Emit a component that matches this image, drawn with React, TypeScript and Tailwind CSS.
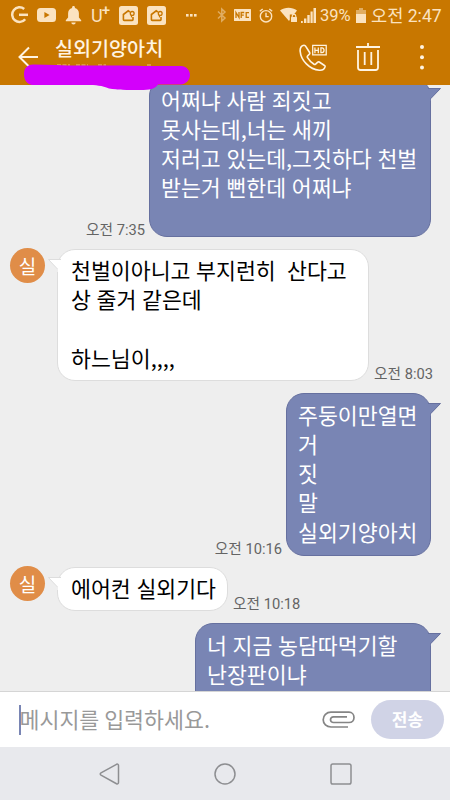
import React from 'react';

interface Message {
  id: number;
  sent: boolean;
  lines: string[];
  time?: string;
  row: string;
  bubble: string;
}

const messages: Message[] = [
  {
    id: 1,
    sent: true,
    lines: ['어쩌냐 사람 죄짓고', '못사는데,너는 새끼', '저러고 있는데,그짓하다 천벌', '받는거 뻔한데 어쩌냐'],
    time: '오전 7:35',
    row: '-mt-[7px]',
    bubble: 'w-[282px] h-[159px]',
  },
  {
    id: 2,
    sent: false,
    lines: ['천벌이아니고 부지런히  산다고', '상 줄거 같은데', '', '하느님이,,,,'],
    time: '오전 8:03',
    row: 'mt-3',
    bubble: 'w-[312px] h-[132px]',
  },
  {
    id: 3,
    sent: true,
    lines: ['주둥이만열면', '거', '짓', '말', '실외기양아치'],
    time: '오전 10:16',
    row: 'mt-3',
    bubble: 'w-[145px] h-[163px]',
  },
  {
    id: 4,
    sent: false,
    lines: ['에어컨 실외기다'],
    time: '오전 10:18',
    row: 'mt-[11px]',
    bubble: 'w-[171px] h-[44px]',
  },
  {
    id: 5,
    sent: true,
    lines: ['너 지금 농담따먹기할', '난장판이냐'],
    row: 'mt-3',
    bubble: 'w-[236px] h-[100px]',
  },
];

const HomeBadge: React.FC = () => (
  <svg width="19" height="19" viewBox="0 0 19 19" className="shrink-0">
    <rect width="19" height="19" rx="2.5" fill="#fbe3c0" />
    <path d="M14 11v2.600a.8.8 0 0 1-.8.8H5.200a.8.8 0 0 1-.8-.8V8.500L9.200 4.800l1.600 1.200" fill="none" stroke="#c87700" strokeWidth="1.600" />
    <circle cx="13.200" cy="7.400" r="1.900" fill="none" stroke="#c87700" strokeWidth="1.300" />
    <path d="M12.500 9.200v2.200" stroke="#c87700" strokeWidth="1.200" />
  </svg>
);

const StatusBar: React.FC = () => (
  <div className="flex h-[30px] shrink-0 items-center pl-[10px] text-[#fbe3c0]">
    <svg width="19" height="18" viewBox="0 0 19 18" fill="none" stroke="currentColor" strokeWidth="2.500" className="shrink-0">
      <path d="M14.200 3A7.300 7.300 0 1 0 15.200 13.200" />
      <path d="M9 8.800h9" />
    </svg>
    <svg width="19" height="14" viewBox="0 0 19 14" className="ml-2 shrink-0">
      <rect width="19" height="14" rx="3.500" fill="currentColor" />
      <path d="M7.400 4v6l5.200-3z" fill="#c87700" />
    </svg>
    <svg width="17" height="19" viewBox="0 0 17 19" fill="currentColor" className="ml-[9px] shrink-0">
      <path d="M8.500 0c.9 0 1.400.6 1.400 1.400v.5c2.700.7 4 2.800 4 5.400v4.300l2.300 2.600v1H.8v-1l2.300-2.600V7.300C3.100 4.700 4.400 2.600 7.100 1.900v-.5C7.100.6 7.600 0 8.500 0z" />
      <path d="M6.300 16.500h4.400a2.200 2 0 0 1-4.400 0z" />
    </svg>
    <div className="ml-[9px] flex h-6 w-[19px] shrink-0 items-start">
      <span className="font-['Roboto'] text-[18px] leading-[26px]">U</span>
      <span className="-ml-px font-['Roboto'] text-[15px] font-medium leading-[14px]">+</span>
    </div>
    <div className="ml-[9px] flex gap-[9px]">
      <HomeBadge />
      <HomeBadge />
    </div>
    <svg width="11" height="3" viewBox="0 0 11 3" fill="currentColor" className="ml-5 shrink-0">
      <rect width="2.600" height="2.600" />
      <rect x="4" width="2.600" height="2.600" />
      <rect x="8" width="2.600" height="2.600" />
    </svg>
    <svg width="10" height="16" viewBox="0 0 10 16" fill="none" stroke="#e0ad62" strokeWidth="1.500" className="ml-5 shrink-0">
      <path d="M1 4.500l7 6.500-3.200 3V2L8 5l-7 6.500" />
    </svg>
    <svg width="17" height="12" viewBox="0 0 17 12" className="ml-[7px] shrink-0">
      <rect width="17" height="12" rx=".5" fill="currentColor" />
      <path d="M2 9V3.500L5 8.500V3M7.200 9V3.500h3M7.200 6.200h2.600M15 3.700h-2.800v4.600H15" fill="none" stroke="#c87700" strokeWidth="1.300" />
    </svg>
    <svg width="14" height="15" viewBox="0 0 14 15" fill="none" stroke="currentColor" strokeWidth="1.400" className="ml-2 shrink-0">
      <circle cx="7" cy="8.300" r="5.700" />
      <path d="M7 4.800v3.800h2.700M.8 3.300 3.700 1M13.200 3.300 10.300 1" />
    </svg>
    <svg width="18" height="16" viewBox="0 0 18 16" className="ml-[7px] shrink-0">
      <path d="M0 3.500C5-.3 12-.3 17 3.500L9 14z" fill="currentColor" />
      <rect x="9.800" y="7.500" width="7.500" height="8" fill="#c87700" />
      <rect x="11" y="10" width="6" height="5" rx=".5" fill="currentColor" />
      <path d="M12.200 10.500V9.200a1.800 1.800 0 0 1 3.600 0v1.300" fill="none" stroke="currentColor" strokeWidth="1.200" />
    </svg>
    <svg width="15" height="15" viewBox="0 0 15 15" fill="currentColor" className="ml-[3px] shrink-0">
      <path d="M0 13h1.800v2H0zM3 10.500h2.400V15H3zM6.300 7h2.400v8H6.300zM9.500 3.500h2.200V15H9.500zM12.500 0H15v15h-2.500z" />
    </svg>
    <span className="ml-1 w-[31px] translate-y-px font-['Roboto'] text-[16.500px] leading-5">39%</span>
    <svg width="10" height="15" viewBox="0 0 10 15" className="ml-[5px] shrink-0">
      <path d="M3 0h4v2h3v4H0V2h3z" fill="#e0ad62" />
      <rect y="6" width="10" height="9" fill="currentColor" />
    </svg>
    <span className="ml-[5px] translate-y-px whitespace-nowrap font-['Roboto','Noto_Sans_CJK_KR',sans-serif] text-[17.600px] leading-5">오전 2:47</span>
  </div>
);

const Header: React.FC = () => (
  <header className="relative z-10 h-[85px] shrink-0 bg-[#c87700]">
    <StatusBar />
    <div className="flex h-[55px] items-start text-[#fff4e2]">
      <svg width="21" height="22" viewBox="0 0 21 22" fill="none" stroke="currentColor" strokeWidth="2" className="ml-[18px] mt-4 shrink-0">
        <path d="M20 11H1.500M11 1.500 1.500 11l9.500 9.500" />
      </svg>
      <h1 className="ml-4 mt-1 w-[115px] whitespace-nowrap text-[19.600px] font-medium leading-[28px]">실외기양아치</h1>
      <svg width="28" height="28" viewBox="0 0 29 29" fill="none" stroke="currentColor" strokeWidth="1.700" className="ml-[129px] mt-[14px] shrink-0">
        <path d="M4.200 1.500C2 2.200 1 4.500 1.200 7.500 2 17 11 26.500 21 27.200c3 .2 5.500-1.200 6-3.700.1-.6-.1-1-.6-1.300L21 18.700c-.6-.4-1.100-.3-1.600.1l-2.200 2.100c-.5.400-1 .5-1.600.1-2.900-1.900-5.300-4.300-6.900-7.100-.3-.6-.2-1 .2-1.500l1.900-2c.4-.5.500-1 .2-1.600L7 2.500c-.6-1.200-1.600-1.400-2.800-1z" />
        <path d="M14.200 1.500h14v9.800h-14z" strokeWidth="1.300" />
        <path d="M16.500 3.500v6M20 3.500v6M16.500 6.500H20M22.700 4.100v4.800h1c3 0 3-4.800 0-4.800z" strokeWidth="1.300" />
      </svg>
      <svg width="24" height="30" viewBox="0 0 24 30" fill="none" stroke="currentColor" strokeWidth="1.800" className="ml-[29px] mt-3 shrink-0">
        <path d="M0 5h24M12 1v4M2 8v17.500A2.500 2.500 0 0 0 4.500 28h15a2.500 2.500 0 0 0 2.500-2.500V8M8.700 10v13M15.300 10v13" />
      </svg>
      <svg width="4" height="25" viewBox="0 0 4 25" fill="currentColor" className="ml-[40px] mt-[15px] shrink-0">
        <circle cx="2" cy="2" r="2" />
        <circle cx="2" cy="12.200" r="2" />
        <circle cx="2" cy="22.400" r="2" />
      </svg>
    </div>
    {/* marker strokes hiding the phone number */}
    <svg width="200" height="36" viewBox="0 0 200 36" className="absolute left-0 top-[60px]">
      <path d="M57 5h13M76 5h12M98 5h8M147 5h5" stroke="#e8bd80" strokeWidth="1.200" strokeDasharray="4 1.500" />
      <path d="M24 14c0-6 3-9 9-9.500 18 0 35 1.500 55 1 20 0 35-.5 55 .5h38c5 0 9 4 9 9s-4 9-9 9.500h-23c-3 4.500-8 5.500-18 5.500-14 0-22 0-31-1.500-7-3-13-3.500-22-3.500H32c-5-1-8-4.500-8-11z" fill="#d300fb" />
    </svg>
  </header>
);

const MessageRow: React.FC<{ message: Message }> = ({ message }) => {
  const { sent, lines, time, row, bubble } = message;
  const stamp = time && (
    <span className="block translate-y-px whitespace-nowrap font-['Roboto','Noto_Sans_CJK_KR',sans-serif] text-[14.700px] leading-4 text-[#646464]">
      {time}
    </span>
  );
  const text = lines.map((line, i) => (
    <p key={i} className="h-[29.250px] whitespace-pre">
      {line}
    </p>
  ));

  if (sent) {
    return (
      <div className={`flex shrink-0 items-end justify-end pr-[19px] ${row}`}>
        <div className="mr-1">{stamp}</div>
        <div className={`relative shrink-0 rounded-[18px] border border-[#66709f] bg-[#7985b4] pl-[11px] pt-[5.500px] text-[21.650px] leading-[29.250px] [word-spacing:0.8px] text-white ${bubble}`}>
          {text}
          <svg width="16" height="13" viewBox="0 0 16 13" className="absolute -right-[11px] top-[9px]">
            <path d="M0 .5h15.500L5.500 11v2H0z" fill="#7985b4" />
            <path d="M3 .5h12.500L5.500 10.800" fill="none" stroke="#66709f" />
          </svg>
        </div>
      </div>
    );
  }

  return (
    <div className={`flex shrink-0 items-start pl-[10px] ${row}`}>
      <div className="-mt-px flex size-[35px] shrink-0 items-center justify-center rounded-full bg-[#e08d48] pb-px text-[19px] leading-none text-white">
        실
      </div>
      <div className={`relative ml-3 shrink-0 rounded-[18px] border border-[#dddddd] bg-white pl-[13px] pt-[5px] text-[21.650px] leading-[29.250px] [word-spacing:0.8px] text-black ${bubble}`}>
        {text}
        <svg width="16" height="13" viewBox="0 0 16 13" className="absolute -left-[10px] top-[9px]">
          <path d="M16 .5H.5L9.500 10v3H16z" fill="white" />
          <path d="M13 .5H.5L9.500 10" fill="none" stroke="#dddddd" />
        </svg>
      </div>
      <div className="ml-[5px] self-end">{stamp}</div>
    </div>
  );
};

const Composer: React.FC = () => (
  <div className="flex h-[56px] shrink-0 items-center border-t border-[#d5d5d5] bg-white pr-[6px]">
    <div className="ml-[19px] h-[30px] w-[1.500px] shrink-0 bg-[#7985b4]" />
    <span className="-ml-px -mt-0.5 w-[302px] whitespace-nowrap text-[21.700px] leading-[30px] text-[#999999]">메시지를 입력하세요.</span>
    <svg width="33" height="18" viewBox="0 0 33 18" fill="none" stroke="#858585" strokeWidth="1.700" className="shrink-0">
      <path d="M26 16H9C4.500 16 1.200 13 1.200 8.800S4.500 1.200 9 1.200h18c3 0 5 2.300 5 5.200s-2 5.100-5 5.100H11.500c-1.800 0-3-1.200-3-2.800s1.200-2.800 3-2.800H25" />
    </svg>
    <button className="ml-auto h-[39px] w-[73px] rounded-full bg-[#d0d3e6] pb-0.5 text-[17px] font-bold leading-none text-white">전송</button>
  </div>
);

const NavBar: React.FC = () => (
  <nav className="flex h-[53px] shrink-0 items-center bg-[#e8e9ed] pl-[99px] text-[#8d8e91]">
    <svg width="21" height="22" viewBox="0 0 21 22" fill="none" stroke="currentColor" strokeWidth="1.500">
      <path d="M17.500 1.300 2 9.800c-1 .6-1 1.800 0 2.400l15.500 8.500c1.200.5 2-.1 2-1.200v-17c0-1.100-.8-1.700-2-1.200z" />
    </svg>
    <svg width="22" height="22" viewBox="0 0 22 22" fill="none" stroke="currentColor" strokeWidth="1.500" className="ml-[94px]">
      <circle cx="11" cy="11" r="10" />
    </svg>
    <svg width="22" height="22" viewBox="0 0 22 22" fill="none" stroke="currentColor" strokeWidth="1.500" className="ml-[94px]">
      <rect x="1" y="1" width="20" height="20" rx="1.800" />
    </svg>
  </nav>
);

export default function App() {
  return (
    <div className="flex h-[800px] w-[450px] flex-col overflow-hidden bg-[#eeeeee] font-['Noto_Sans_CJK_KR',sans-serif]">
      <Header />
      <main className="flex min-h-0 flex-1 flex-col overflow-hidden">
        {messages.map((message) => (
          <MessageRow key={message.id} message={message} />
        ))}
      </main>
      <Composer />
      <NavBar />
    </div>
  );
}
